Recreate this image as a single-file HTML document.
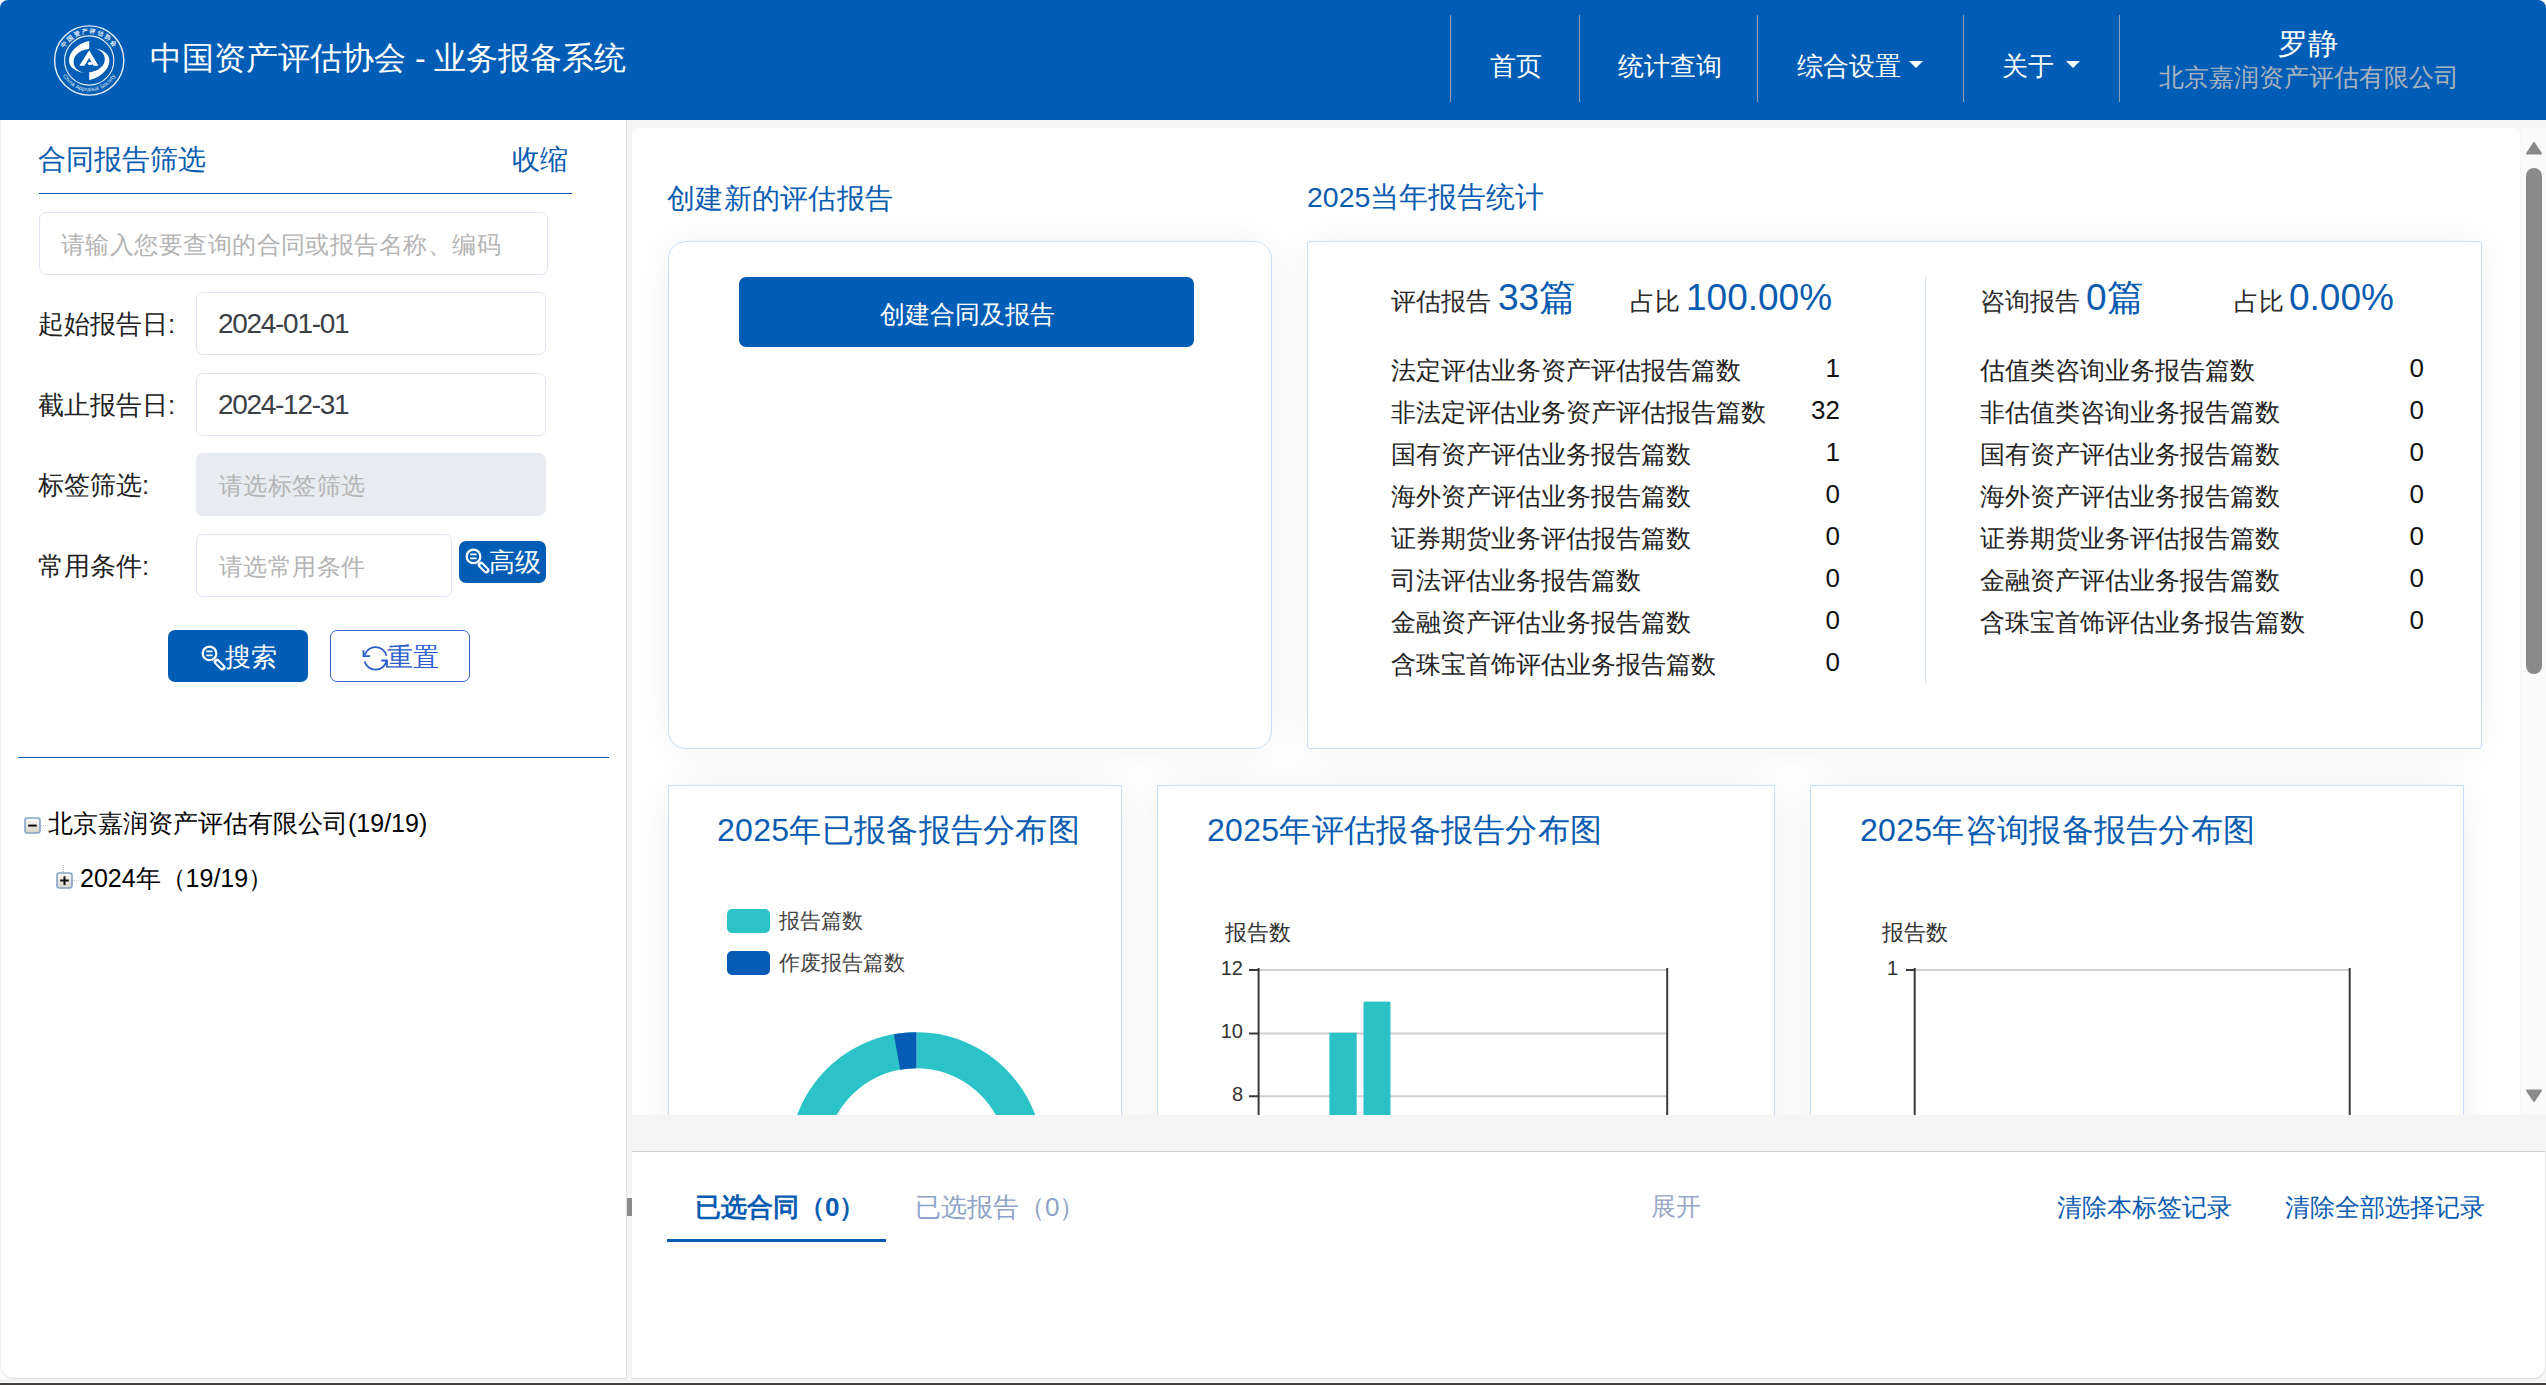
<!DOCTYPE html>
<html><head><meta charset="utf-8">
<style>
*{box-sizing:border-box;margin:0;padding:0}
html,body{width:2546px;height:1385px;overflow:hidden;background:#fff;font-family:"Liberation Sans",sans-serif;}
.abs{position:absolute}
#hdr{position:absolute;left:0;top:0;width:2546px;height:120px;background:#005db5;border-radius:8px 8px 0 0;}
#title{position:absolute;left:150px;top:38px;font-size:32px;line-height:40px;color:#fff;white-space:nowrap}
.sep{position:absolute;top:15px;width:1px;height:87px;background:#8d9db3}
.nav{position:absolute;top:46px;font-size:26px;line-height:40px;color:#fff;white-space:nowrap}
.caret{position:absolute;width:0;height:0;border-left:7px solid transparent;border-right:7px solid transparent;border-top:7px solid #fff}
#left{position:absolute;left:0;top:120px;width:627px;height:1259px;background:#fff;border-right:1px solid #e3e3e3;border-bottom:1px solid #dcdcdc;box-shadow:inset 1px 0 0 #f2f2f2;border-radius:0 0 0 13px}
#mainbg{position:absolute;left:627px;top:120px;width:1919px;height:1259px;background:#f5f5f5}
#card{position:absolute;left:632px;top:128px;width:1888px;height:987px;background:#fff;border-radius:8px 8px 0 0;overflow:hidden}
#bottom{position:absolute;left:632px;top:1151px;width:1914px;height:228px;background:#fff;border-top:1px solid #cfcfcf;border-bottom:1px solid #dcdcdc;border-right:1px solid #e6e6e6;border-radius:0 0 13px 0}
#strip{position:absolute;left:0;top:1379px;width:2546px;height:3px;background:#f3f3f3}
#darkbar{position:absolute;left:0;top:1383px;width:2546px;height:2px;background:#433f3d}
.t{position:absolute;white-space:nowrap;line-height:40px}
.inp{position:absolute;border:1px solid #dfe6f3;border-radius:7px;background:#fff}
.ph{position:absolute;left:22px;top:12px;font-size:24px;letter-spacing:0.45px;line-height:40px;color:#b4b4b4;white-space:nowrap}
.val{position:absolute;left:21px;top:11px;font-size:28px;letter-spacing:-1.3px;line-height:40px;color:#3b4046;white-space:nowrap}
.lbl{position:absolute;left:38px;font-size:25.6px;line-height:40px;color:#222;margin-top:-1.5px;white-space:nowrap}
.btn{position:absolute;background:#005db5;color:#fff;border-radius:7px;text-align:center;white-space:nowrap}
.btn2{position:absolute;background:#fff;color:#3a66c8;border:1.5px solid #3a66c8;border-radius:7px;text-align:center;white-space:nowrap}
.treeicon{position:absolute;width:16px;height:16px;border:1px solid #9aa3ad;border-radius:2px;background:linear-gradient(#f4f6f8,#d5dbe1);font-size:14px;line-height:13px;text-align:center;color:#222;font-weight:bold}
.big{font-size:37px;line-height:48px;color:#0a5cb0}
.row{font-size:25px;color:#242424}
.num{font-size:26px;color:#111;width:100px;text-align:right;margin-top:-2px;margin-left:2px}
.ccard{border:1px solid #c6def7;background:#fff;box-shadow:0 0 40px rgba(0,0,0,0.06)}
.ctitle{font-size:32px;letter-spacing:0.3px;color:#0a5cb0;line-height:40px}
.leg{font-size:21.5px;color:#444;line-height:40px}
.ax{font-size:20px;color:#333;width:100px;text-align:right;line-height:40px}
.blue{color:#0a5cb0}
</style></head><body>
<div id="hdr">
  <svg class="abs" style="left:52px;top:24px" width="74" height="74" viewBox="0 0 74 74">
    <defs><path id="arcT" d="M9.5 37A27.7 27.7 0 0 1 64.9 37"/><path id="arcB" d="M7 37A30.2 30.2 0 0 0 67.4 37"/></defs>
    <circle cx="37.2" cy="36.5" r="34.6" fill="none" stroke="#e8eef8" stroke-width="1.4"/>
    <circle cx="37.2" cy="36.5" r="24.6" fill="none" stroke="#e8eef8" stroke-width="1.1"/>
    <text font-size="6.2" fill="#e8eef8" font-family="Liberation Serif, serif" font-weight="bold"><textPath href="#arcT" startOffset="50%" text-anchor="middle" letter-spacing="1.6">中国资产评估协会</textPath></text>
    <text font-size="5.6" fill="#e8eef8" font-family="Liberation Sans, sans-serif"><textPath href="#arcB" startOffset="50%" text-anchor="middle" letter-spacing="0.2">China Appraisal Society</textPath></text>
    <path d="M37.2 17C27 19 17 27 17 36.5C17 43 23 47.5 32 48.8C25 47 21.6 43 21.6 37.8C21.6 31 28 26 37.2 24.8Z" fill="#fff"/>
    <path d="M37.2 56C47.4 54 57.4 46 57.4 36.5C57.4 30 51.4 25.5 42.4 24.2C49.4 26 52.8 30 52.8 35.2C52.8 42 46.4 47 37.2 48.2Z" fill="#fff"/>
    <path d="M37.2 26.3L46.4 41.8H41.6L37.2 34L32.4 41.8H27.3Z" fill="#fff"/>
    <ellipse cx="38.2" cy="39.6" rx="2.6" ry="1.5" fill="#fff"/>
  </svg>
  <div id="title">中国资产评估协会 - 业务报备系统</div>
  <div class="sep" style="left:1450px"></div>
  <div class="sep" style="left:1579px"></div>
  <div class="sep" style="left:1757px"></div>
  <div class="sep" style="left:1963px"></div>
  <div class="sep" style="left:2119px"></div>
  <div class="nav" style="left:1490px">首页</div>
  <div class="nav" style="left:1618px">统计查询</div>
  <div class="nav" style="left:1797px">综合设置</div><div class="caret abs" style="left:1909px;top:61px;margin:0"></div>
  <div class="nav" style="left:2002px">关于</div><div class="caret abs" style="left:2066px;top:61px;margin:0"></div>
  <div class="nav" style="left:2278px;top:23.5px;font-size:29.5px">罗静</div>
  <div class="nav" style="left:2159px;top:57px;font-size:25px;color:#a9b3c0">北京嘉润资产评估有限公司</div>
</div>
<div id="left">
  <div class="t" style="left:38px;top:20px;font-size:28px;color:#0a5cb0">合同报告筛选</div>
  <div class="t" style="left:512px;top:20px;font-size:28px;color:#0a5cb0">收缩</div>
  <div class="abs" style="left:39px;top:73px;width:533px;height:1px;background:#005cb5"></div>
  <div class="inp" style="left:39px;top:92px;width:509px;height:63px"><span class="ph" style="left:21px">请输入您要查询的合同或报告名称、编码</span></div>
  <div class="lbl" style="top:185px">起始报告日:</div>
  <div class="inp" style="left:196px;top:172px;width:350px;height:63px"><span class="val">2024-01-01</span></div>
  <div class="lbl" style="top:266px">截止报告日:</div>
  <div class="inp" style="left:196px;top:253px;width:350px;height:63px"><span class="val">2024-12-31</span></div>
  <div class="lbl" style="top:346px">标签筛选:</div>
  <div class="inp" style="left:196px;top:333px;width:350px;height:63px;background:#e8ebef;border-color:#e8ebef"><span class="ph">请选标签筛选</span></div>
  <div class="lbl" style="top:427px">常用条件:</div>
  <div class="inp" style="left:196px;top:414px;width:256px;height:63px"><span class="ph">请选常用条件</span></div>
  <div class="btn" style="left:459px;top:421px;width:87px;height:42px"></div><svg class="abs" style="left:461px;top:424px" width="32" height="32" viewBox="0 0 32 32"><circle cx="12.5" cy="12.4" r="6.8" fill="none" stroke="#fff" stroke-width="2.3"/><path d="M9.2 10.4H15.6M9.2 14.4H15.6" stroke="#fff" stroke-width="1.8"/><path d="M19.8 20.8L25.4 26.4" stroke="#fff" stroke-width="6.2" stroke-linecap="round"/><path d="M20.3 21.3L24.9 25.9" stroke="#005db5" stroke-width="2.2" stroke-linecap="round"/></svg><div class="t" style="left:489px;top:422px;font-size:26px;color:#fff">高级</div>
  <div class="btn" style="left:168px;top:510px;width:140px;height:52px"></div><svg class="abs" style="left:197px;top:521px" width="32" height="32" viewBox="0 0 32 32"><circle cx="12.5" cy="12.4" r="6.8" fill="none" stroke="#fff" stroke-width="2.3"/><path d="M9.2 10.4H15.6M9.2 14.4H15.6" stroke="#fff" stroke-width="1.8"/><path d="M19.8 20.8L25.4 26.4" stroke="#fff" stroke-width="6.2" stroke-linecap="round"/><path d="M20.3 21.3L24.9 25.9" stroke="#005db5" stroke-width="2.2" stroke-linecap="round"/></svg><div class="t" style="left:225px;top:517px;font-size:26px;color:#fff">搜索</div>
  <div class="btn2" style="left:330px;top:510px;width:140px;height:52px"></div><svg class="abs" style="left:355px;top:515px" width="40" height="40" viewBox="0 0 40 40" fill="none" stroke="#2a5ccc" stroke-width="1.8"><path d="M31.5 20.8A11.3 11.3 0 0 0 9.7 20"/><path d="M8.5 15.2V21.2H15"/><path d="M9.6 26.4A11.3 11.3 0 0 0 31.5 26"/><path d="M26.2 25.5H32V32.5"/></svg><div class="t" style="left:387px;top:517px;font-size:26px;color:#2a5ccc">重置</div>
  <div class="abs" style="left:18px;top:637px;width:591px;height:1px;background:#005cb5"></div>
  <svg class="abs" style="left:24px;top:697px" width="17" height="17" viewBox="0 0 17 17"><defs><linearGradient id="tg24" x1="0" y1="0" x2="0" y2="1"><stop offset="0" stop-color="#fbfbfb"/><stop offset="1" stop-color="#d9d3c6"/></linearGradient></defs><rect x="1" y="1" width="15" height="15" rx="2.5" fill="url(#tg24)" stroke="#86a3c6" stroke-width="1.6"/><path d="M4.2 8.6H12.8" stroke="#111" stroke-width="2"/></svg>
  <div class="abs" style="left:41px;top:705px;width:7px;border-top:1px dotted #bbb"></div>
  <div class="t" style="left:48px;top:683px;font-size:25px;color:#000">北京嘉润资产评估有限公司(19/19)</div>
  <div class="abs" style="left:63px;top:745px;height:7px;border-left:1px dotted #bbb"></div><div class="abs" style="left:73px;top:760px;width:6px;border-top:1px dotted #ccc"></div>
  <svg class="abs" style="left:56px;top:752px" width="17" height="17" viewBox="0 0 17 17"><defs><linearGradient id="tg56" x1="0" y1="0" x2="0" y2="1"><stop offset="0" stop-color="#fbfbfb"/><stop offset="1" stop-color="#d9d3c6"/></linearGradient></defs><rect x="1" y="1" width="15" height="15" rx="2.5" fill="url(#tg56)" stroke="#86a3c6" stroke-width="1.6"/><path d="M4.2 8.6H12.8M8.5 4.3V12.9" stroke="#111" stroke-width="2"/></svg>
  <div class="t" style="left:80px;top:738px;font-size:25px;color:#000">2024年（19/19）</div>
</div>
<div id="strip"></div><div id="mainbg"></div>
<div id="card"><div class="abs" style="left:-632px;top:-128px;width:2546px;height:1385px">
  <div class="t" style="left:667px;top:178.5px;font-size:28px;letter-spacing:0.3px;color:#0a5cb0">创建新的评估报告</div>
  <div class="t" style="left:1307px;top:177px;font-size:28.5px;color:#0a5cb0">2025当年报告统计</div>
  <div class="abs" style="left:668px;top:241px;width:604px;height:508px;border:1px solid #c6def7;border-radius:18px;box-shadow:0 0 40px rgba(0,0,0,0.06)"></div>
  <div class="btn" style="left:739px;top:277px;width:455px;height:70px"></div>
  <div class="t" style="left:880px;top:295px;font-size:24.5px;color:#fff">创建合同及报告</div>
  <div class="abs" style="left:1307px;top:241px;width:1175px;height:508px;border:1px solid #c6def7;border-radius:3px;box-shadow:0 0 40px rgba(0,0,0,0.06)"></div>
  <div class="abs" style="left:1925px;top:277px;width:1px;height:407px;background:#d3e4f3"></div>
  <div class="t" style="left:1391px;top:281px;font-size:25px;color:#2a2a2a">评估报告</div>
  <div class="t big" style="left:1498px;top:274px">33篇</div>
  <div class="t" style="left:1630px;top:281px;font-size:25px;color:#2a2a2a">占比</div>
  <div class="t big" style="left:1686px;top:274px">100.00%</div>
  <div class="t" style="left:1980px;top:281px;font-size:25px;color:#2a2a2a">咨询报告</div>
  <div class="t big" style="left:2086px;top:274px">0篇</div>
  <div class="t" style="left:2234px;top:281px;font-size:25px;color:#2a2a2a">占比</div>
  <div class="t big" style="left:2289px;top:274px">0.00%</div>
  <div class="t row" style="left:1391px;top:350px">法定评估业务资产评估报告篇数</div><div class="t num" style="left:1738px;top:350px">1</div>
  <div class="t row" style="left:1391px;top:392px">非法定评估业务资产评估报告篇数</div><div class="t num" style="left:1738px;top:392px">32</div>
  <div class="t row" style="left:1391px;top:434px">国有资产评估业务报告篇数</div><div class="t num" style="left:1738px;top:434px">1</div>
  <div class="t row" style="left:1391px;top:476px">海外资产评估业务报告篇数</div><div class="t num" style="left:1738px;top:476px">0</div>
  <div class="t row" style="left:1391px;top:518px">证券期货业务评估报告篇数</div><div class="t num" style="left:1738px;top:518px">0</div>
  <div class="t row" style="left:1391px;top:560px">司法评估业务报告篇数</div><div class="t num" style="left:1738px;top:560px">0</div>
  <div class="t row" style="left:1391px;top:602px">金融资产评估业务报告篇数</div><div class="t num" style="left:1738px;top:602px">0</div>
  <div class="t row" style="left:1391px;top:644px">含珠宝首饰评估业务报告篇数</div><div class="t num" style="left:1738px;top:644px">0</div>
  <div class="t row" style="left:1980px;top:350px">估值类咨询业务报告篇数</div><div class="t num" style="left:2322px;top:350px">0</div>
  <div class="t row" style="left:1980px;top:392px">非估值类咨询业务报告篇数</div><div class="t num" style="left:2322px;top:392px">0</div>
  <div class="t row" style="left:1980px;top:434px">国有资产评估业务报告篇数</div><div class="t num" style="left:2322px;top:434px">0</div>
  <div class="t row" style="left:1980px;top:476px">海外资产评估业务报告篇数</div><div class="t num" style="left:2322px;top:476px">0</div>
  <div class="t row" style="left:1980px;top:518px">证券期货业务评估报告篇数</div><div class="t num" style="left:2322px;top:518px">0</div>
  <div class="t row" style="left:1980px;top:560px">金融资产评估业务报告篇数</div><div class="t num" style="left:2322px;top:560px">0</div>
  <div class="t row" style="left:1980px;top:602px">含珠宝首饰评估业务报告篇数</div><div class="t num" style="left:2322px;top:602px">0</div>
  <div class="abs ccard" style="left:668px;top:785px;width:454px;height:400px"></div>
  <div class="abs ccard" style="left:1157px;top:785px;width:618px;height:400px"></div>
  <div class="abs ccard" style="left:1810px;top:785px;width:654px;height:400px"></div>
  <div class="t ctitle" style="left:717px;top:810px">2025年已报备报告分布图</div>
  <div class="t ctitle" style="left:1207px;top:810px">2025年评估报备报告分布图</div>
  <div class="t ctitle" style="left:1860px;top:810px">2025年咨询报备报告分布图</div>
  <div class="abs" style="left:727px;top:909px;width:43px;height:24px;border-radius:5px;background:#2bc3c8"></div>
  <div class="t leg" style="left:779px;top:900.5px;font-size:21px">报告篇数</div>
  <div class="abs" style="left:727px;top:951px;width:43px;height:24px;border-radius:5px;background:#065bb5"></div>
  <div class="t leg" style="left:779px;top:942.5px;font-size:21px">作废报告篇数</div>
  <svg class="abs" style="left:668px;top:785px" width="1796" height="400" viewBox="668 785 1796 400">
    <path d="M916.5 1032.2A127 127 0 1 1 915.9 1032.2L916.0 1068.2A91 91 0 1 0 916.5 1068.2Z" fill="#2bc3c8"/>
    <path d="M893.8 1034.2A127 127 0 0 1 916.5 1032.2L916.5 1068.2A91 91 0 0 0 900.2 1069.7Z" fill="#065bb5"/>
    <g stroke="#cfcfcf" stroke-width="2"><path d="M1258 970H1667M1258 1033.4H1667M1258 1096.3H1667M1915 970H2350"/></g>
    <g stroke="#3a3a3a" stroke-width="2"><path d="M1258.6 968V1200M1667.2 968V1200M1249 970H1258M1249 1033.4H1258M1249 1096.3H1258M1914.7 968V1200M2349.7 968V1200M1906 970H1914"/></g>
    <rect x="1329.4" y="1032.7" width="27.3" height="200" fill="#2bc2c5"/>
    <rect x="1363.5" y="1001.6" width="27" height="200" fill="#2bc2c5"/>
  </svg>
  <div class="t leg" style="left:1225px;top:913px;color:#333">报告数</div>
  <div class="t leg" style="left:1882px;top:913px;color:#333">报告数</div>
  <div class="t ax" style="left:1143px;top:948px">12</div>
  <div class="t ax" style="left:1143px;top:1011px">10</div>
  <div class="t ax" style="left:1143px;top:1074px">8</div>
  <div class="t ax" style="left:1798px;top:948px">1</div>
</div></div>
<div class="abs" style="left:2521px;top:128px;width:25px;height:987px;background:#fafafa"></div>
<svg class="abs" style="left:2521px;top:128px" width="25" height="987" viewBox="0 0 25 987">
  <path d="M13 15L20 25.5H6Z" fill="#8a8a8a" stroke="#8a8a8a" stroke-width="2" stroke-linejoin="round"/>
  <rect x="5" y="40" width="16" height="506" rx="8" fill="#8a8a8a"/>
  <path d="M13 973L20 962.5H6Z" fill="#8a8a8a" stroke="#8a8a8a" stroke-width="2" stroke-linejoin="round"/>
</svg>
<div id="bottom">
  <div class="t" style="left:63px;top:35px;font-size:26px;color:#0a5cb0;font-weight:bold">已选合同（0）</div>
  <div class="abs" style="left:35px;top:87px;width:219px;height:3px;background:#065bb5"></div>
  <div class="t" style="left:283px;top:35px;font-size:26px;color:#8ea3c6">已选报告（0）</div>
  <div class="t" style="left:1019px;top:34px;font-size:25px;color:#98a7c6">展开</div>
  <div class="t" style="left:1425px;top:35px;font-size:25px;color:#0a5cb0">清除本标签记录</div>
  <div class="t" style="left:1653px;top:35px;font-size:25px;color:#0a5cb0">清除全部选择记录</div>
</div>
<div class="abs" style="left:627px;top:1198px;width:5px;height:18px;background:#8a8a8a"></div>
<div id="darkbar"></div>
</body></html>
